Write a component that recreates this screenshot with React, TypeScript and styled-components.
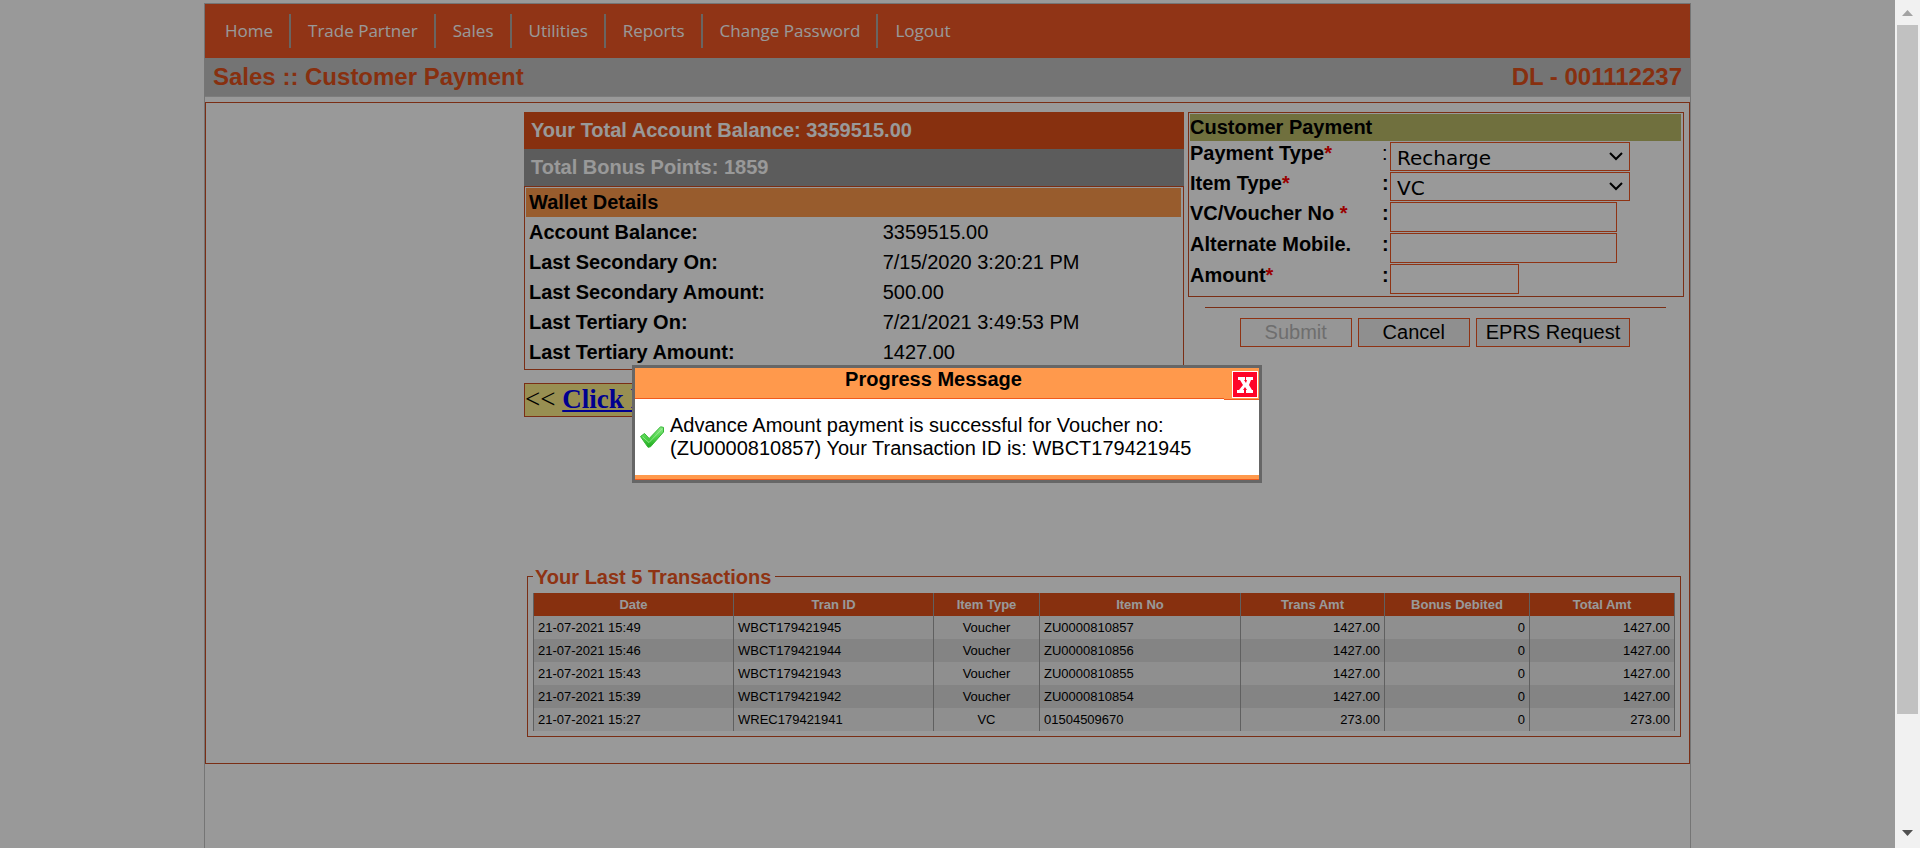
import React from "react";
import styled, { createGlobalStyle } from "styled-components";

const sans = `"Liberation Sans", Arial, sans-serif`;
const line = "#cb4e24";
const control = "#ee5622";

const GlobalStyle = createGlobalStyle`
  *, *::before, *::after { box-sizing: border-box; }
  body {
    margin: 0;
    background: #fff;
    color: #000;
    font: 20px/23px ${sans};
  }
  button, input, select { margin: 0; color: inherit; }
`;

const Screen = styled.div`
  display: flex;
  min-height: 100vh;
  padding: 3px 25px 0 0;
`;

const Shell = styled.div`
  flex: 1;
  min-width: 0;
  margin: 0 204px;
  border: 1px solid #c4c4c4;
  border-bottom: 0;
`;

const Nav = styled.nav`
  display: flex;
  align-items: center;
  height: 54px;
  padding-left: 3px;
  background: #f05726;
`;

const NavLink = styled.a`
  padding: 0 16px 0 17px;
  border-right: 2px solid #b0a8a4;
  color: #fff;
  font: 17px/34px "Open Sans", "Noto Sans", sans-serif;
  text-decoration: none;
  white-space: nowrap;
  &:last-child { border-right: 0; }
`;

const TitleBar = styled.header`
  display: flex;
  justify-content: space-between;
  align-items: center;
  height: 39px;
  padding: 0 8px 2px;
  border-bottom: 1px solid #cfcfcf;
  background: #c1c1c1;
  color: #e1501a;
  font-size: 24px;
  font-weight: bold;
`;

const PageTitle = styled.h1`
  margin: 0;
  font: inherit;
`;

const Content = styled.main`
  margin-top: 5px;
  padding: 9px 5px 26px 318px;
  border: 1px solid ${line};
`;

const Overview = styled.div`
  display: grid;
  grid-template-columns: 660fr 496fr;
  gap: 4px;
  align-items: start;
`;

const Summary = styled.p<{ $tone: string }>`
  margin: 0;
  padding: 7px;
  background: ${(p) => p.$tone};
  color: #fff;
  font-weight: bold;
`;

const WalletBox = styled.section`
  padding: 1px 2px 2px 1px;
  border: 1px solid ${line};
`;

const PanelTitle = styled.h2<{ $tone: string; $pad: string }>`
  margin: 0;
  padding: ${(p) => p.$pad};
  background: ${(p) => p.$tone};
  font-size: 20px;
  font-weight: bold;
`;

const WalletTable = styled.table`
  width: 100%;
  border-collapse: collapse;
  table-layout: fixed;
  th, td {
    height: 30px;
    padding: 0 3px;
    text-align: left;
  }
  th { width: 54%; }
`;

const Strip = styled.div`
  width: 50%;
  height: 34px;
  margin-top: 13px;
  border: 1px solid ${line};
  background: #fdee89;
  font: 27px/31px "Liberation Serif", "Times New Roman", serif;
  white-space: nowrap;
`;

const StripLink = styled.a`
  color: #0000ee;
  font-weight: bold;
`;

const FormBox = styled.div`
  padding: 1px 2px 2px 1px;
  border: 1px solid ${line};
`;

const Field = styled.div`
  display: grid;
  grid-template-columns: 192px 8px 1fr;
  margin-top: 1px;
  font-weight: bold;
`;

const Required = styled.span`
  color: #ff0000;
`;

const Colon = styled.span<{ $light?: boolean }>`
  font-weight: ${(p) => (p.$light ? "normal" : "bold")};
`;

const SelectWrap = styled.span`
  position: relative;
  display: block;
  width: 240px;
  height: 29px;
  svg {
    position: absolute;
    top: 9px;
    right: 6px;
    pointer-events: none;
  }
`;

const Select = styled.select`
  width: 100%;
  height: 100%;
  padding: 2px 6px 0;
  border: 1px solid ${control};
  border-radius: 0;
  appearance: none;
  background: #fff;
  font: 20px/26px Verdana, "DejaVu Sans", sans-serif;
`;

const TextInput = styled.input<{ $short?: boolean }>`
  width: ${(p) => (p.$short ? 129 : 227)}px;
  height: 30px;
  padding: 2px 4px;
  border: 1px solid ${control};
  background: #fff;
  font: 20px/23px ${sans};
`;

const Rule = styled.hr`
  margin: 10px 18px 10px 17px;
  border: 0;
  border-top: 1px solid ${line};
`;

const Actions = styled.div`
  display: flex;
  justify-content: center;
  gap: 6px;
  padding-right: 2px;
`;

const ActionButton = styled.button`
  min-width: 112px;
  height: 29px;
  padding: 0 9px;
  border: 1px solid ${control};
  background: #efefef;
  font: 20px/23px ${sans};
  &:disabled {
    background: #fafafa;
    color: #b8b8b8;
  }
`;

const Transactions = styled.fieldset`
  margin: 147px 3px 0;
  padding: 4px 5px 5px;
  border: 1px solid ${line};
`;

const Legend = styled.legend`
  padding: 2px 4px 0 2px;
  color: #ee5622;
  font-weight: bold;
`;

const DataTable = styled.table`
  width: 100%;
  border-collapse: collapse;
  table-layout: fixed;
  font-size: 13px;
  line-height: 15px;
  th, td {
    height: 23px;
    padding: 0 4px;
    border: 0 solid #a0a0a0;
    border-width: 0 1px;
  }
  th {
    background: #e1501a;
    color: #fff;
  }
  tbody tr { background: #efefef; }
  tbody tr:nth-child(even) { background: #dcdcdc; }
`;

const Cell = styled.td<{ $align: string }>`
  text-align: ${(p) => p.$align};
`;

const Overlay = styled.div`
  position: fixed;
  inset: 0 25px 0 0;
  display: flex;
  align-items: center;
  justify-content: center;
  padding-right: 1px;
  background: rgba(0, 0, 0, 0.4);
`;

const Dialog = styled.div`
  width: 630px;
  border: 3px solid #666;
  background: #fff;
`;

const DialogHead = styled.div`
  display: flex;
  align-items: flex-start;
`;

const DialogTitle = styled.h2`
  flex: 1;
  height: 31px;
  margin: 0;
  padding-left: 8px;
  border-bottom: 1px solid #f05a1e;
  background: #ff994c;
  font-size: 20px;
  text-align: center;
`;

const DialogCorner = styled.div`
  display: flex;
  justify-content: flex-end;
  width: 35px;
  height: 32px;
  padding: 3px 1px 0 0;
  border-bottom: 1px solid #f05a1e;
  background: #ff994c;
`;

const CloseButton = styled.button`
  display: block;
  width: 26px;
  height: 27px;
  padding: 0;
  border: 1px solid #fff;
  background: #ff0528;
  svg { display: block; }
`;

const DialogBody = styled.div`
  display: flex;
  align-items: center;
  gap: 6px;
  height: 75px;
  padding: 0 5px 2px;
`;

const Message = styled.p`
  margin: 0;
`;

const DialogFoot = styled.div`
  height: 5px;
  border-bottom: 1px solid #f05a1e;
  background: #ff994c;
`;

const ScrollTrack = styled.div`
  position: fixed;
  inset: 0 0 0 auto;
  display: flex;
  flex-direction: column;
  width: 25px;
  background: #f1f1f1;
`;

const ScrollThumb = styled.div`
  flex: 689;
  margin: 0 2px;
  background: #c1c1c1;
`;

const ScrollRest = styled.div`
  flex: 109;
`;

const navItems = ["Home", "Trade Partner", "Sales", "Utilities", "Reports", "Change Password", "Logout"];

const wallet = [
  ["Account Balance:", "3359515.00"],
  ["Last Secondary On:", "7/15/2020 3:20:21 PM"],
  ["Last Secondary Amount:", "500.00"],
  ["Last Tertiary On:", "7/21/2021 3:49:53 PM"],
  ["Last Tertiary Amount:", "1427.00"],
];

const columns = [
  { name: "Date", share: 200, align: "left" },
  { name: "Tran ID", share: 200, align: "left" },
  { name: "Item Type", share: 106, align: "center" },
  { name: "Item No", share: 201, align: "left" },
  { name: "Trans Amt", share: 144, align: "right" },
  { name: "Bonus Debited", share: 145, align: "right" },
  { name: "Total Amt", share: 145, align: "right" },
];
const totalShare = columns.reduce((sum, c) => sum + c.share, 0);

const transactions = [
  ["21-07-2021 15:49", "WBCT179421945", "Voucher", "ZU0000810857", "1427.00", "0", "1427.00"],
  ["21-07-2021 15:46", "WBCT179421944", "Voucher", "ZU0000810856", "1427.00", "0", "1427.00"],
  ["21-07-2021 15:43", "WBCT179421943", "Voucher", "ZU0000810855", "1427.00", "0", "1427.00"],
  ["21-07-2021 15:39", "WBCT179421942", "Voucher", "ZU0000810854", "1427.00", "0", "1427.00"],
  ["21-07-2021 15:27", "WREC179421941", "VC", "01504509670", "273.00", "0", "273.00"],
];

const Chevron = () => (
  <svg width="16" height="10" viewBox="0 0 16 10" fill="none" aria-hidden="true">
    <path d="M2 2l6 6 6-6" stroke="#000" strokeWidth="2" />
  </svg>
);

const Tick = () => (
  <svg width="24" height="22" viewBox="0 0 24 22" aria-hidden="true">
    <defs>
      <linearGradient id="tick" x1="0" y1="0" x2="0" y2="1">
        <stop offset="0" stopColor="#8ee88a" />
        <stop offset="0.5" stopColor="#4fd44a" />
        <stop offset="1" stopColor="#1fa81f" />
      </linearGradient>
    </defs>
    <path
      d="M.5 10.500 4.500 7.500l4.700 5L20.500.8l3 .6v4.600L10.500 20.800 8 21.300z"
      fill="url(#tick)"
      stroke="#35b535"
      strokeWidth="1"
      strokeLinejoin="round"
    />
    <path d="M2.500 10.800 9 16.500 22 3" fill="none" stroke="#a8f2a0" strokeWidth="1" opacity="0.700" />
  </svg>
);

export default function App() {
  return (
    <>
      <GlobalStyle />
      <Screen>
        <Shell>
          <Nav>
            {navItems.map((item) => (
              <NavLink key={item} href="#">{item}</NavLink>
            ))}
          </Nav>
          <TitleBar>
            <PageTitle>Sales :: Customer Payment</PageTitle>
            <span>DL - 001112237</span>
          </TitleBar>
          <Content>
            <Overview>
              <div>
                <Summary $tone="#e1501a">Your Total Account Balance: 3359515.00</Summary>
                <Summary $tone="#999999">Total Bonus Points: 1859</Summary>
                <WalletBox>
                  <PanelTitle $tone="#fe994b" $pad="3px">Wallet Details</PanelTitle>
                  <WalletTable>
                    <tbody>
                      {wallet.map(([name, value]) => (
                        <tr key={name}>
                          <th scope="row">{name}</th>
                          <td>{value}</td>
                        </tr>
                      ))}
                    </tbody>
                  </WalletTable>
                </WalletBox>
                <Strip>
                  &lt;&lt; <StripLink href="#">Click here</StripLink>
                </Strip>
              </div>
              <form onSubmit={(e) => e.preventDefault()}>
                <FormBox>
                  <PanelTitle $tone="#bbbb68" $pad="2px 0">Customer Payment</PanelTitle>
                  <Field>
                    <label htmlFor="paymentType">Payment Type<Required>*</Required></label>
                    <Colon $light>:</Colon>
                    <SelectWrap>
                      <Select id="paymentType"><option>Recharge</option></Select>
                      <Chevron />
                    </SelectWrap>
                  </Field>
                  <Field>
                    <label htmlFor="itemType">Item Type<Required>*</Required></label>
                    <Colon>:</Colon>
                    <SelectWrap>
                      <Select id="itemType"><option>VC</option></Select>
                      <Chevron />
                    </SelectWrap>
                  </Field>
                  <Field>
                    <label htmlFor="voucher">VC/Voucher No <Required>*</Required></label>
                    <Colon>:</Colon>
                    <TextInput id="voucher" type="text" />
                  </Field>
                  <Field>
                    <label htmlFor="mobile">Alternate Mobile.</label>
                    <Colon>:</Colon>
                    <TextInput id="mobile" type="text" />
                  </Field>
                  <Field>
                    <label htmlFor="amount">Amount<Required>*</Required></label>
                    <Colon>:</Colon>
                    <TextInput id="amount" type="text" $short />
                  </Field>
                </FormBox>
                <Rule />
                <Actions>
                  <ActionButton type="submit" disabled>Submit</ActionButton>
                  <ActionButton type="button">Cancel</ActionButton>
                  <ActionButton type="button">EPRS Request</ActionButton>
                </Actions>
              </form>
            </Overview>
            <Transactions>
              <Legend>Your Last 5 Transactions</Legend>
              <DataTable>
                <colgroup>
                  {columns.map((c) => (
                    <col key={c.name} style={{ width: `${(c.share / totalShare) * 100}%` }} />
                  ))}
                </colgroup>
                <thead>
                  <tr>
                    {columns.map((c) => (
                      <th key={c.name} scope="col">{c.name}</th>
                    ))}
                  </tr>
                </thead>
                <tbody>
                  {transactions.map((row) => (
                    <tr key={row[1]}>
                      {row.map((value, i) => (
                        <Cell key={columns[i].name} $align={columns[i].align}>{value}</Cell>
                      ))}
                    </tr>
                  ))}
                </tbody>
              </DataTable>
            </Transactions>
          </Content>
        </Shell>
      </Screen>
      <Overlay>
        <Dialog role="dialog" aria-labelledby="dialogTitle">
          <DialogHead>
            <DialogTitle id="dialogTitle">Progress Message</DialogTitle>
            <DialogCorner>
              <CloseButton type="button" aria-label="Close">
                <svg width="24" height="24" viewBox="0 0 24 24" aria-hidden="true">
                  <path
                    d="M5 4h7v3h-1l2 3 1-3h-1V4h7v3h-2l-2 5 3 5h1v3h-7v-3h1l-2-3-2 3h1v3H4v-3h2l4-5-3-5H5z"
                    fill="#fff"
                  />
                </svg>
              </CloseButton>
            </DialogCorner>
          </DialogHead>
          <DialogBody>
            <Tick />
            <Message>
              Advance Amount payment is successful for Voucher no:
              <br />
              (ZU0000810857) Your Transaction ID is: WBCT179421945
            </Message>
          </DialogBody>
          <DialogFoot />
        </Dialog>
      </Overlay>
      <ScrollTrack aria-hidden="true">
        <svg width="25" height="25" viewBox="0 0 25 25">
          <path d="M7 16h11l-5.500-6z" fill="#a3a3a3" />
        </svg>
        <ScrollThumb />
        <ScrollRest />
        <svg width="25" height="25" viewBox="0 0 25 25">
          <path d="M7 7h11l-5.500 6z" fill="#505050" />
        </svg>
      </ScrollTrack>
    </>
  );
}
